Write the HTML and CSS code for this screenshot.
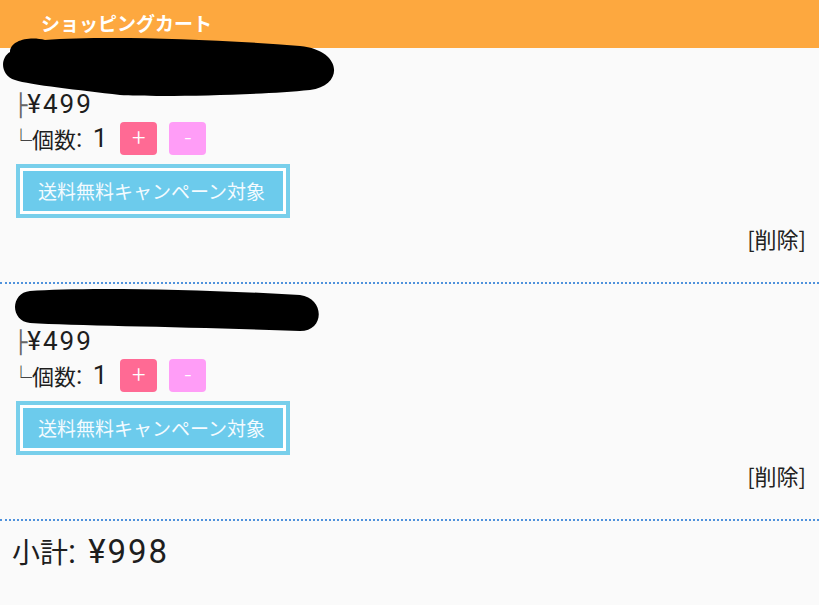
FILE: index.html
```html
<!DOCTYPE html>
<html lang="ja">
<head>
<meta charset="utf-8">
<title>ショッピングカート</title>
<link rel="stylesheet" href="styles.css">
</head>
<body>
<div class="page">
  <header class="header">ショッピングカート</header>

  <section class="item item-first">
    <div class="name">【商品名】サンプル商品</div>
    <svg class="redact" width="350" height="64" viewBox="0 0 350 64" aria-hidden="true">
      <path d="M10 16 C10 4 30 0 45 4 C100 0 200 2 300 10 C342 14 345 49 310 54 C250 60 150 61 120 59 C80 54 30 49 15 44 C0 39 0 22 10 16 Z" fill="#000"/>
    </svg>
    <div class="line"><span class="tree">├</span><span class="num">¥499</span></div>
    <div class="line qty"><span class="tree tree-end">└</span><span class="label">個数</span><span class="num">: 1</span>
      <button class="btn plus">+</button>
      <button class="btn minus">-</button>
    </div>
    <div class="badge"><span class="badge-in">送料無料キャンペーン対象</span></div>
    <div class="delete">[削除]</div>
  </section>

  <section class="item">
    <div class="name">【商品名】サンプル商品</div>
    <svg class="redact redact2" width="350" height="64" viewBox="0 0 350 64" aria-hidden="true">
      <path d="M30 7 C80 3 200 5 300 11 C325 14 325 47 300 47 C200 43 80 42 30 39 C10 37 10 9 30 7 Z" fill="#000"/>
    </svg>
    <div class="line"><span class="tree">├</span><span class="num">¥499</span></div>
    <div class="line qty"><span class="tree tree-end">└</span><span class="label">個数</span><span class="num">: 1</span>
      <button class="btn plus">+</button>
      <button class="btn minus">-</button>
    </div>
    <div class="badge"><span class="badge-in">送料無料キャンペーン対象</span></div>
    <div class="delete">[削除]</div>
  </section>

  <div class="subtotal">小計<span class="num">: ¥998</span></div>
</div>
</body>
</html>
```

FILE: styles.css
```css
* { box-sizing: border-box; }

html, body {
  margin: 0;
  padding: 0;
  background: #ffffff;
}

body {
  font-family: Roboto, "Noto Sans CJK JP", sans-serif;
  color: #1e1e1e;
}

.page {
  width: 819px;
  min-height: 605px;
  background: #fafafa;
}

.header {
  height: 48px;
  background: #fda83f;
  color: #fff;
  font-family: "Noto Sans CJK JP", sans-serif;
  font-weight: 700;
  font-size: 19px;
  line-height: 46px;
  padding-left: 41px;
}

.item {
  position: relative;
  padding: 8px 13px 26px 14px;
  border-bottom: 2px dotted #4f92dc;
}

.item-first {
  padding-top: 7px;
}

.name {
  height: 32px;
  font-size: 22px;
  line-height: 32px;
  padding-left: 9px;
}

.redact {
  position: absolute;
  left: 0;
  top: -12px;
}

.redact2 {
  top: 0;
}

.line {
  font-family: "Noto Sans CJK JP", sans-serif;
  font-size: 22px;
  line-height: 32px;
  height: 32px;
  white-space: nowrap;
}

.num {
  font-family: Roboto, sans-serif;
  font-size: 26px;
  letter-spacing: 2px;
}

.tree {
  font-family: "DejaVu Sans", sans-serif;
  font-size: 22px;
  color: #666;
}

.tree-end {
  font-family: "Noto Sans CJK JP", sans-serif;
  margin-left: -4px;
  color: #444;
}

.qty {
  display: flex;
  align-items: center;
  height: 38px;
}

.btn {
  width: 37px;
  height: 33px;
  border: none;
  border-radius: 4px;
  color: #fff;
  font-family: Roboto, sans-serif;
  font-weight: 300;
  font-size: 24px;
  line-height: 33px;
  padding: 0;
  margin-left: 12px;
}

.btn.plus {
  background: #ff6a94;
  margin-left: 11px;
}

.btn.minus {
  background: #ff9df7;
}

.badge {
  display: inline-block;
  margin-top: 7px;
  margin-left: 2px;
  border: 4px solid #78cfeb;
  padding: 3px;
  background: #fff;
}

.badge-in {
  display: block;
  background: #6ccbec;
  color: #f4fbff;
  font-family: "Noto Sans CJK JP", sans-serif;
  font-size: 19px;
  line-height: 40px;
  padding: 0 18px 0 15px;
}

.delete {
  text-align: right;
  font-size: 22px;
  line-height: 32px;
  margin-top: 4px;
  margin-bottom: 2px;
  color: #222;
  font-family: "Noto Sans CJK JP", sans-serif;
}

.subtotal {
  font-family: "Noto Sans CJK JP", sans-serif;
  font-size: 28px;
  line-height: 36px;
  padding: 12px 12px;
  white-space: nowrap;
}

.subtotal .num {
  font-size: 33px;
  letter-spacing: 2px;
}
```
